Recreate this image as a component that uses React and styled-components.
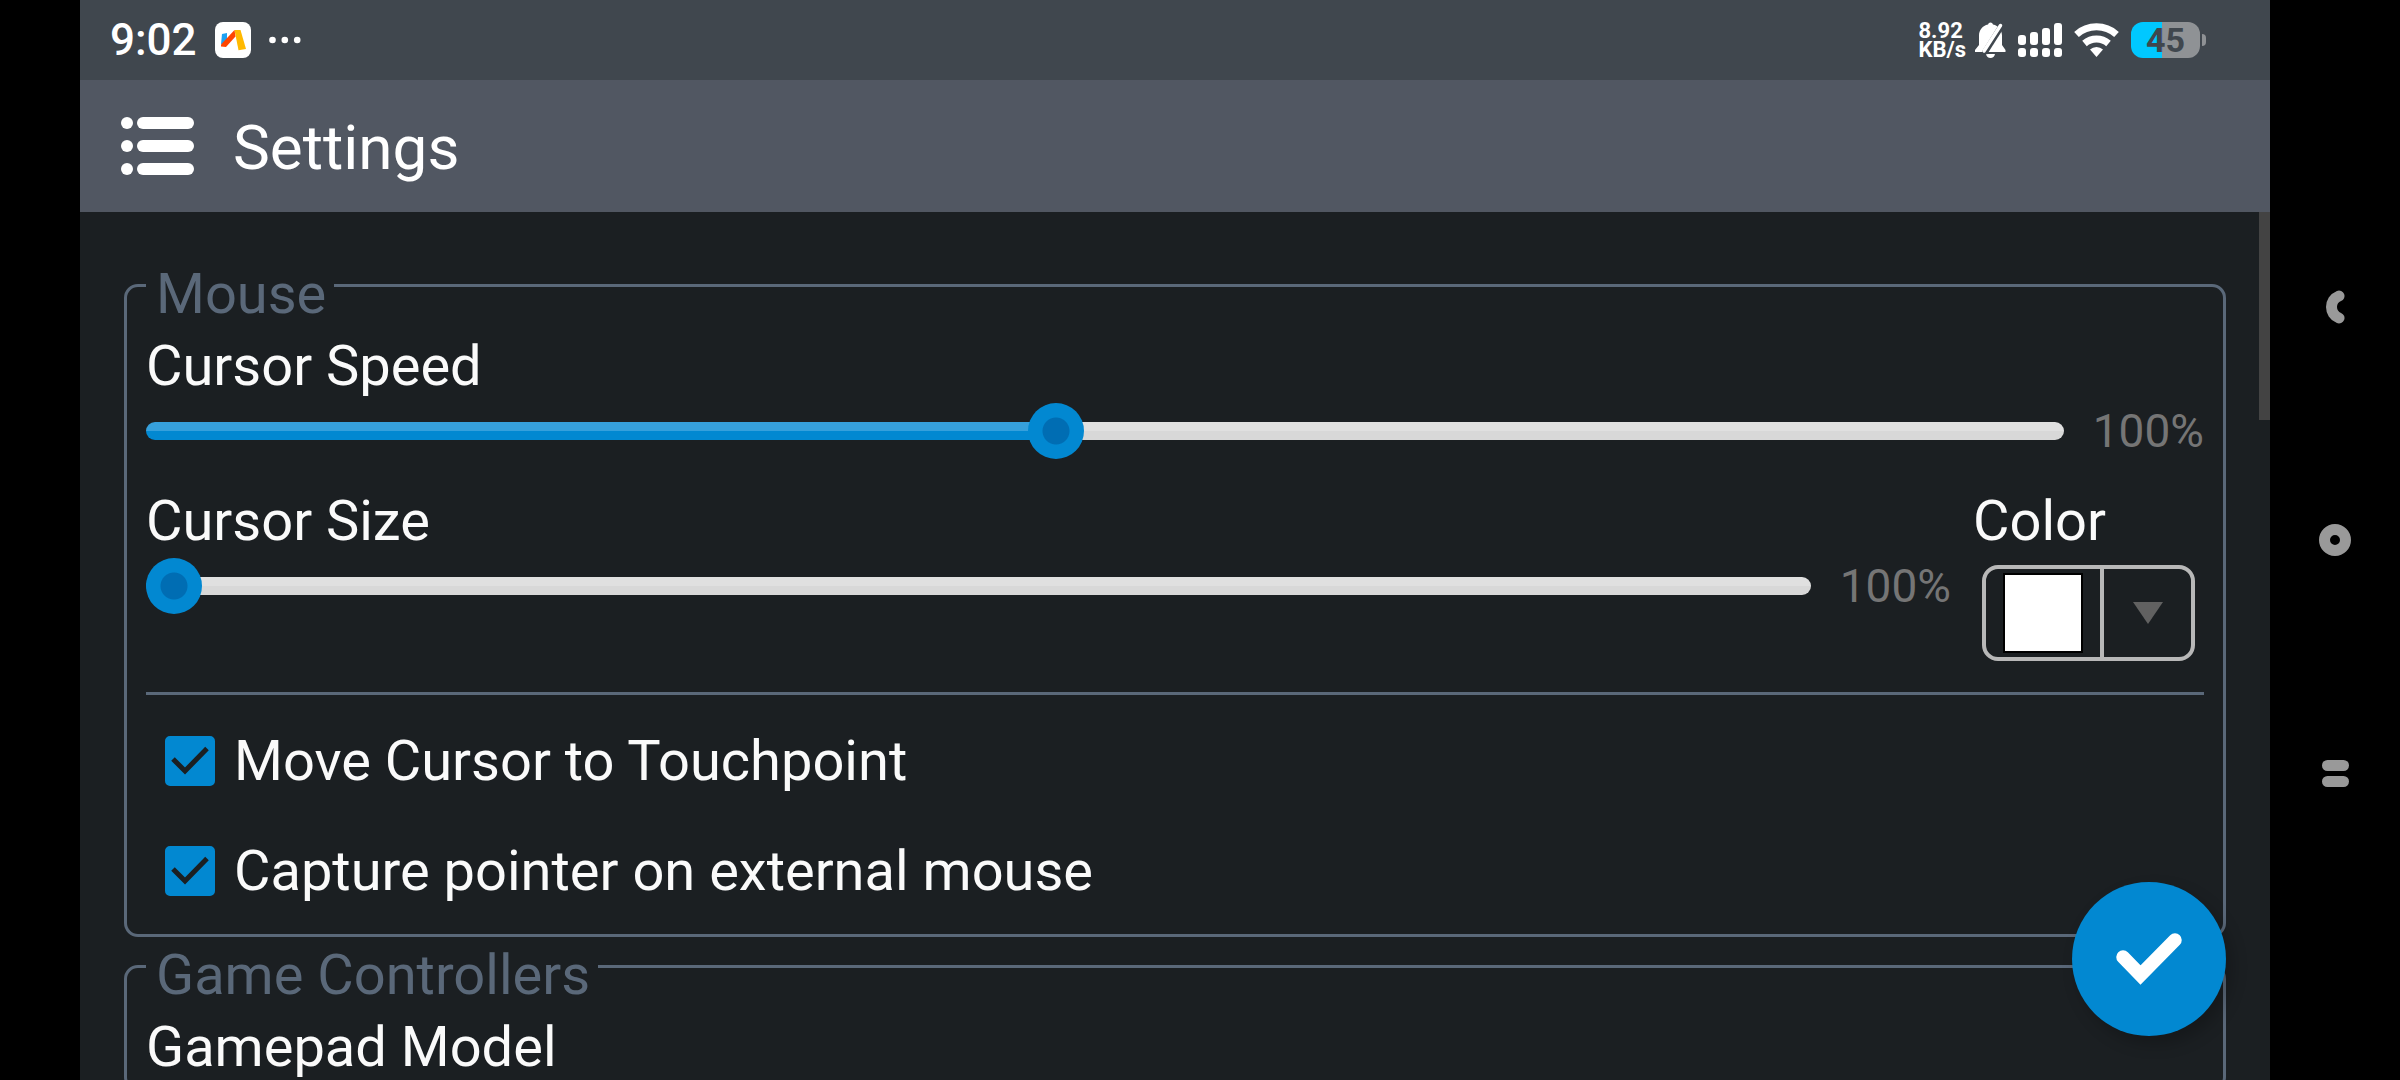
import React, { useState } from "react";
import styled, { createGlobalStyle } from "styled-components";

const colors = {
  status: "#40474e",
  bar: "#515762",
  page: "#1b1f22",
  outline: "#5a6879",
  text: "#fafafa",
  muted: "#757575",
  accent: "#0288d1",
  accentDark: "#006db3",
};

const Global = createGlobalStyle`
  *, *::before, *::after { box-sizing: border-box; }
  body { margin: 0; background: #000; font-family: Roboto, "Liberation Sans", sans-serif; }
  button { font: inherit; color: inherit; background: none; border: 0; padding: 0; cursor: pointer; }
  svg { display: block; }
`;

const Device = styled.div`
  display: grid;
  grid-template-columns: 80px minmax(0, 1fr) 130px;
  height: 100vh;
  overflow: hidden;
`;

const Screen = styled.div`
  grid-column: 2;
  position: relative;
  display: flex;
  flex-direction: column;
  min-height: 0;
  background: ${colors.page};
  color: ${colors.text};
`;

const StatusBar = styled.div`
  flex: none;
  display: flex;
  align-items: center;
  justify-content: space-between;
  height: 80px;
  padding: 0 64px 0 30px;
  background: ${colors.status};
  color: #fff;
`;

const StatusGroup = styled.div`
  display: flex;
  align-items: center;
  gap: ${(p) => p.$gap}px;
`;

const Clock = styled.time`
  font-size: 44px;
  font-weight: 500;
`;

const NetSpeed = styled.div`
  display: flex;
  flex-direction: column;
  font-size: 22px;
  font-weight: 700;
  line-height: 19px;
`;

const Battery = styled.div`
  display: flex;
  align-items: center;
  gap: 2px;
  &::after {
    content: "";
    width: 4px;
    height: 12px;
    border-radius: 0 6px 6px 0;
    background: #8f9295;
  }
`;

const BatteryBody = styled.div`
  width: 69px;
  height: 36px;
  border-radius: 12px;
  background: linear-gradient(to right, #00c8ff 45%, #8f9295 45%);
  color: ${colors.status};
  font-size: 34px;
  font-weight: 700;
  line-height: 36px;
  text-align: center;
`;

const AppBar = styled.header`
  flex: none;
  display: flex;
  align-items: center;
  gap: 39px;
  height: 132px;
  padding: 0 41px;
  background: ${colors.bar};
  color: #fff;
`;

const Title = styled.h1`
  margin: 0;
  padding-top: 3px;
  font-size: 62px;
  font-weight: 400;
`;

const Body = styled.main`
  flex: 1;
  position: relative;
  display: flex;
  flex-direction: column;
  gap: 2px;
  min-height: 0;
  padding: 46px 44px 0;
  overflow: hidden;
`;

const ScrollThumb = styled.div`
  position: absolute;
  top: 0;
  right: 0;
  width: 11px;
  height: 24%;
  background: #434343;
`;

const Group = styled.fieldset`
  flex: none;
  min-width: 0;
  margin: 0;
  padding: 20px 19px 8px;
  border: 3px solid ${colors.outline};
  border-radius: 14px;
`;

const Legend = styled.legend`
  padding: 17px 8px 0 10px;
  color: ${colors.outline};
  font-size: 56px;
  line-height: 38px;
`;

const Label = styled.label`
  display: block;
  font-size: 56px;
  line-height: 66px;
`;

const Field = styled.div`
  flex: 1;
  display: flex;
  flex-direction: column;
  gap: 4px;
  margin-bottom: 29px;
`;

const SliderRow = styled.div`
  display: flex;
  align-items: center;
  gap: 29px;
  height: 56px;
`;

const Value = styled.output`
  color: ${colors.muted};
  font-size: 46px;
`;

const Range = styled.input`
  flex: 1;
  min-width: 0;
  height: 56px;
  margin: 0;
  appearance: none;
  background: none;

  &::-webkit-slider-runnable-track {
    height: 18px;
    border-radius: 9px;
    background:
      linear-gradient(#36a0dc 50%, ${colors.accent} 50%) left / var(--fill) 100% no-repeat,
      linear-gradient(#e0e0e0 50%, #d8d8d8 50%);
  }

  &::-webkit-slider-thumb {
    appearance: none;
    width: 56px;
    height: 56px;
    margin-top: -19px;
    border-radius: 50%;
    background: radial-gradient(circle, ${colors.accentDark} 13px, ${colors.accent} 14px);
  }
`;

const SplitRow = styled.div`
  display: flex;
  gap: 22px;
`;

const ColorField = styled.div`
  display: flex;
  flex-direction: column;
  width: 231px;
  gap: 11px;
  margin-bottom: 31px;
`;

const ColorButton = styled.button`
  align-self: center;
  display: grid;
  grid-template-columns: 114px 1fr;
  width: 213px;
  height: 96px;
  border: 4px solid #b8b8b8;
  border-radius: 16px;
`;

const ColorCell = styled.span`
  display: grid;
  place-items: center;
  height: 100%;
  & + & {
    border-left: 4px solid #b8b8b8;
  }
`;

const Swatch = styled.span`
  width: 80px;
  height: 80px;
  border: 2px solid #000;
  background: #fff;
`;

const Divider = styled.hr`
  height: 3px;
  margin: 0 0 11px;
  border: 0;
  background: ${colors.outline};
`;

const CheckRow = styled.label`
  display: flex;
  align-items: center;
  gap: 19px;
  height: 110px;
  padding-left: 19px;
  font-size: 56px;
`;

const CheckBox = styled.span`
  display: grid;
  width: 50px;
  height: 50px;
  & > * {
    grid-area: 1 / 1;
  }
  & > svg {
    pointer-events: none;
  }
`;

const CheckInput = styled.input`
  width: 50px;
  height: 50px;
  margin: 0;
  appearance: none;
  border: 4px solid ${colors.accent};
  border-radius: 5px;
  &:checked {
    background: ${colors.accent};
  }
  &:not(:checked) + svg {
    visibility: hidden;
  }
`;

const Fab = styled.button`
  position: absolute;
  right: 44px;
  bottom: 44px;
  display: grid;
  place-items: center;
  width: 154px;
  height: 154px;
  border-radius: 50%;
  background: ${colors.accent};
  box-shadow: 6px 8px 16px rgba(0, 0, 0, 0.22);
`;

const NavBar = styled.nav`
  grid-column: 3;
  display: flex;
  flex-direction: column;
  align-items: center;
  justify-content: center;
  gap: 173px;
`;

const NavButton = styled.button`
  display: grid;
  place-items: center;
  width: 60px;
  height: 60px;
`;

const AppLogo = () => (
  <svg width="36" height="36" viewBox="0 0 36 36" aria-hidden="true">
    <rect width="36" height="36" rx="8" fill="#fff" />
    <path d="M7 12 12 11v8l-6 3.500z" fill="#1da1f2" />
    <path d="M19.500 8h6L31 27l-7.500 1.300z" fill="#ffb900" />
    <path d="M19.500 8 6 22.500 6 24.500 11 25 20.500 14.500z" fill="#ff4500" />
  </svg>
);

const Dots = () => (
  <svg width="32" height="8" viewBox="0 0 32 8" fill="#fff" aria-hidden="true">
    <circle cx="3.500" cy="4" r="3.300" />
    <circle cx="15.800" cy="4" r="3.300" />
    <circle cx="28.200" cy="4" r="3.300" />
  </svg>
);

const MutedBell = () => (
  <svg width="31" height="36" viewBox="0 0 31 36" aria-hidden="true">
    <path
      fill="#fff"
      d="M13 2.500a2.600 2.600 0 0 1 5 0c5.500 1.200 9 5.500 9 11V23l3.500 5v2H0v-2l4-5v-9.500C4 8 7.500 3.700 13 2.500zM11 32h9c-.5 2.500-2.200 4-4.500 4S11.500 34.500 11 32z"
    />
    <path d="M29 0 9.500 31" stroke={colors.status} strokeWidth="6" />
    <path d="M25.500 3.500 9 29" stroke="#fff" strokeWidth="3.500" strokeLinecap="round" />
  </svg>
);

const Signal = () => (
  <svg width="44" height="34" viewBox="0 0 44 34" fill="#fff" aria-hidden="true">
    {[12, 9, 5, 0].map((top, i) => (
      <g key={top}>
        <rect x={i * 12} y={top} width="8" height={22 - top} rx="3" />
        <rect x={i * 12} y="25" width="8" height="9" rx="3" />
      </g>
    ))}
  </svg>
);

const Wifi = () => (
  <svg width="45" height="34" viewBox="0 0 45 34" aria-hidden="true">
    <g fill="none" stroke="#fff" strokeWidth="7">
      <path d="M2.500 11.500a30 30 0 0 1 40 0" />
      <path d="M10.500 20.500a18.500 18.500 0 0 1 24 0" />
    </g>
    <path d="M22.500 34 16 26.500a9.500 9.500 0 0 1 13 0z" fill="#fff" />
  </svg>
);

const MenuIcon = () => (
  <svg width="73" height="58" viewBox="0 0 73 58" fill="#fff" aria-hidden="true">
    {[0, 23, 46].map((y) => (
      <g key={y}>
        <circle cx="6" cy={y + 6} r="6" />
        <rect x="16" y={y} width="57" height="12" rx="6" />
      </g>
    ))}
  </svg>
);

function Slider({ id, label, min, max, step, initial }) {
  const [value, setValue] = useState(initial);
  const ratio = (value - min) / (max - min);
  const fill = `calc(28px + (100% - 56px) * ${ratio})`;
  return (
    <Field>
      <Label htmlFor={id}>{label}</Label>
      <SliderRow>
        <Range
          id={id}
          type="range"
          min={min}
          max={max}
          step={step}
          value={value}
          onChange={(e) => setValue(Number(e.target.value))}
          style={{ "--fill": fill }}
        />
        <Value htmlFor={id}>{value}%</Value>
      </SliderRow>
    </Field>
  );
}

function Check({ children }) {
  return (
    <CheckRow>
      <CheckBox>
        <CheckInput type="checkbox" defaultChecked />
        <svg width="50" height="50" viewBox="0 0 50 50" aria-hidden="true">
          <path d="M8 23 20 35 42 12.500" fill="none" stroke={colors.page} strokeWidth="5" />
        </svg>
      </CheckBox>
      {children}
    </CheckRow>
  );
}

export default function App() {
  return (
    <Device>
      <Global />
      <Screen>
        <StatusBar>
          <StatusGroup $gap={18}>
            <Clock>9:02</Clock>
            <AppLogo />
            <Dots />
          </StatusGroup>
          <StatusGroup $gap={12}>
            <StatusGroup $gap={9}>
              <NetSpeed>
                <span>8.92</span>
                <span>KB/s</span>
              </NetSpeed>
              <MutedBell />
            </StatusGroup>
            <Signal />
            <Wifi />
            <Battery>
              <BatteryBody>45</BatteryBody>
            </Battery>
          </StatusGroup>
        </StatusBar>
        <AppBar>
          <button type="button" aria-label="Menu">
            <MenuIcon />
          </button>
          <Title>Settings</Title>
        </AppBar>
        <Body>
          <Group>
            <Legend>Mouse</Legend>
            <Slider id="cursor-speed" label="Cursor Speed" min={10} max={200} step={10} initial={100} />
            <SplitRow>
              <Slider id="cursor-size" label="Cursor Size" min={100} max={300} step={10} initial={100} />
              <ColorField>
                <Label htmlFor="cursor-color">Color</Label>
                <ColorButton id="cursor-color" type="button" aria-haspopup="dialog">
                  <ColorCell>
                    <Swatch />
                  </ColorCell>
                  <ColorCell>
                    <svg width="30" height="22" viewBox="0 0 30 22" aria-hidden="true">
                      <path d="M0 0h30L15 22z" fill="#616161" />
                    </svg>
                  </ColorCell>
                </ColorButton>
              </ColorField>
            </SplitRow>
            <Divider />
            <Check>Move Cursor to Touchpoint</Check>
            <Check>Capture pointer on external mouse</Check>
          </Group>
          <Group>
            <Legend>Game Controllers</Legend>
            <Label as="div">Gamepad Model</Label>
          </Group>
          <ScrollThumb />
        </Body>
        <Fab type="button" aria-label="Confirm">
          <svg width="154" height="154" viewBox="0 0 154 154" fill="none" aria-hidden="true">
            <path d="M51 75 68.500 93 103 58" stroke="#fff" strokeWidth="13.500" strokeLinecap="round" />
          </svg>
        </Fab>
      </Screen>
      <NavBar>
        <NavButton type="button" aria-label="Back">
          <svg width="20" height="34" viewBox="0 0 20 34" fill="none" aria-hidden="true">
            <path d="M14 6C4 10 4 24 14 28" stroke="#999" strokeWidth="11" strokeLinecap="round" />
          </svg>
        </NavButton>
        <NavButton type="button" aria-label="Home">
          <svg width="32" height="32" viewBox="0 0 32 32" fill="none" aria-hidden="true">
            <circle cx="16" cy="16" r="10.500" stroke="#999" strokeWidth="11" />
          </svg>
        </NavButton>
        <NavButton type="button" aria-label="Recent apps">
          <svg width="27" height="27" viewBox="0 0 27 27" fill="#999" aria-hidden="true">
            <rect width="27" height="11" rx="5.500" />
            <rect y="16" width="27" height="11" rx="5.500" />
          </svg>
        </NavButton>
      </NavBar>
    </Device>
  );
}
